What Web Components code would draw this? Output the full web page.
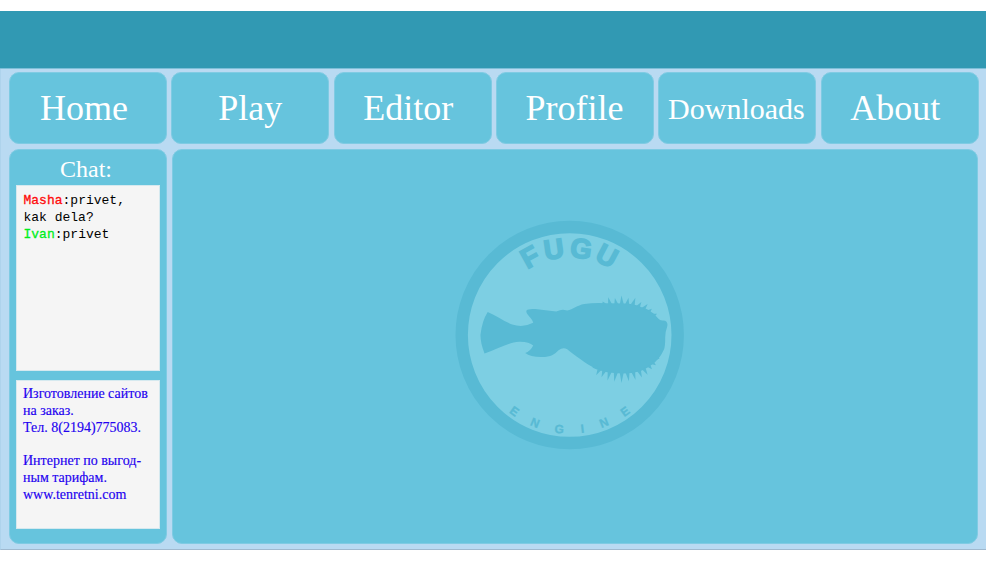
<!DOCTYPE html>
<html lang="en">
<head>
<meta charset="utf-8">
<title>Fugu Engine</title>
<style>
html,body{margin:0;height:562px;background:#fff;overflow:hidden}
body{font-family:"Liberation Serif","Times New Roman",serif}
</style>
</head>
<body>
<fugu-page>
  <fugu-tab slot="nav" style="--inset:31px">Home</fugu-tab>
  <fugu-tab slot="nav" style="--inset:46.8px">Play</fugu-tab>
  <fugu-tab slot="nav" style="--inset:29.5px">Editor</fugu-tab>
  <fugu-tab slot="nav" style="--inset:29.5px">Profile</fugu-tab>
  <fugu-tab slot="nav" style="--inset:9.8px;--size:30px;--line:72px">Downloads</fugu-tab>
  <fugu-tab slot="nav" style="--inset:29.5px">About</fugu-tab>
  <fugu-sidebar slot="side">
    <fugu-message name="Masha" color="#ff0a0a">privet,<br>kak dela?</fugu-message>
    <fugu-message name="Ivan" color="#00ee1c">privet</fugu-message>
    <fugu-ad slot="ad">
      <ad-line>Изготовление сайтов</ad-line>
      <ad-line>на заказ.</ad-line>
      <ad-line style="--h:15px">Тел. 8(2194)775083.</ad-line>
      <ad-line style="--h:18.6px"></ad-line>
      <ad-line>Интернет по выгод-</ad-line>
      <ad-line>ным тарифам.</ad-line>
      <ad-line>www.tenretni.com</ad-line>
    </fugu-ad>
  </fugu-sidebar>
  <fugu-logo></fugu-logo>
</fugu-page>
<script>
const define = (name, html, setup) => customElements.define(name, class extends HTMLElement {
  constructor() {
    super();
    this.attachShadow({ mode: "open" }).innerHTML = html;
  }
  connectedCallback() { if (setup) setup(this, this.shadowRoot); }
});

define("fugu-page", `<style>
:host{display:flex;flex-direction:column;box-sizing:border-box;width:986px;height:550px;padding-top:11px}
header{height:57px;flex:none;background:#3199b3;border-bottom:1px solid #7dbfd8}
.body{flex:1;display:flex;flex-direction:column;gap:5px;box-sizing:border-box;padding:2.5px 7.5px 5px 8px;background:#b9daf2;border-left:1px solid #aed3ec;border-bottom:1px solid #9fb9cf}
nav{display:grid;grid-template-columns:repeat(6,158px);grid-template-rows:72.4px;column-gap:4.33px;height:72.8px;flex:none}
.row{display:flex;gap:5px;flex:1;min-height:0}
main{width:806px;display:grid;place-items:center;box-sizing:border-box;background:#66c4dd;border:1px solid #7fcbe3;border-radius:10px;padding:0 11px 23px 0}
</style><header></header><div class="body"><nav><slot name="nav"></slot></nav><div class="row"><slot name="side"></slot><main><slot></slot></main></div></div>`);

define("fugu-tab", `<style>
:host{display:block;box-sizing:border-box;background:#66c4dd;border:1px solid #7fcbe3;border-radius:10px;color:#fff;white-space:nowrap;padding-left:calc(var(--inset) - 1px);font-size:var(--size,36px);line-height:var(--line,70px)}
</style><slot></slot>`);

define("fugu-sidebar", `<style>
:host{display:flex;flex-direction:column;box-sizing:border-box;width:158px;flex:none;background:#66c4dd;border:1px solid #7fcbe3;border-radius:10px;padding:0 6px}
h2{margin:0;height:35px;line-height:38px;padding-left:44px;font-size:24px;font-weight:400;color:#fff}
.chat{height:186px;box-sizing:border-box;background:#f5f5f5;border:1px solid #d5e9ef;padding:5.5px 6.5px;font:13px/17px "Liberation Mono","Courier New",monospace;color:#000}
.ad{margin-top:9px;height:149px;box-sizing:border-box;background:#f5f5f5;border:1px solid #d5e9ef;padding:5px 6px}
</style><h2>Chat:</h2><div class="chat"><slot></slot></div><div class="ad"><slot name="ad"></slot></div>`);

define("fugu-message", `<style>:host{display:block}span{-webkit-text-stroke:.3px currentColor}</style><span></span>:<slot></slot>`, (el, root) => {
  const who = root.querySelector("span");
  who.textContent = el.getAttribute("name");
  who.style.color = el.getAttribute("color");
});

define("fugu-ad", `<style>:host{display:block;color:#2200f0;font-size:14px;line-height:16.8px;-webkit-text-stroke:.15px #2200f0}</style><slot></slot>`);
define("ad-line", `<style>:host{display:block;height:var(--h,16.8px);line-height:var(--h,16.8px);white-space:nowrap}</style><slot></slot>`);

define("fugu-logo", `<style>
:host{display:block;width:230px;height:230px}svg{display:block}
text{font-family:"Liberation Sans",Arial,sans-serif;font-weight:700;text-anchor:middle;fill:#58bad4}
.big{font-size:27.5px;stroke:#58bad4;stroke-width:1.6}.small{font-size:12px;stroke:#58bad4;stroke-width:.3}
</style><svg width="230" height="230" viewBox="454.8 219.5 230 230">
<circle cx="569.5" cy="334.5" r="108" fill="#7dcfe3" stroke="#58bad4" stroke-width="12.4"/>
<g fill="#58bad4"><path d="M487.5 311.5C496 315 504 321 512 324Q523 327.5 533 322.3C532 317 525 314 526.3 310Q528 308 535 308.6L556 311Q561 309 563 309.3L567 310C573 309 577 304.7 584 303.5Q594 302 606 302.7L624 303Q634 303 642 307C649 309 654 313 658 318Q660 320.5 663 320C667 320 667.7 323 667 326Q664.8 332 665 338Q665 345 664 348.5C661 355 658 359 653 363.3Q647 368 640 370.7Q632 373 622 373Q605 372.5 596 368.5C585 363 575 355 567 348.8Q563 346 558 350C554 354 551 356.7 541 356.6Q530 356.5 525 352.5Q530 351 533 345Q529 341 519 341.2C508 342 497 348.5 484.3 353Q480 342 480.3 334Q482 320 487.5 311.5Z"/>
<g id="spikes"></g></g>
<text class="big" transform="translate(529.6 256) rotate(-29)" y="9.8">F</text>
<text class="big" transform="translate(553.6 248.3) rotate(-8)" y="9.8">U</text>
<text class="big" transform="translate(581 247.7) rotate(8)" y="9.8">G</text>
<text class="big" transform="translate(607 255) rotate(28)" y="9.8">U</text>
<text class="small" transform="translate(514.3 410.7) rotate(36)" y="4.3">E</text>
<text class="small" transform="translate(535 422) rotate(22)" y="4.3">N</text>
<text class="small" transform="translate(559 428.3) rotate(5)" y="4.3">G</text>
<text class="small" transform="translate(582.3 428) rotate(-7)" y="4.3">I</text>
<text class="small" transform="translate(603.7 422) rotate(-22)" y="4.3">N</text>
<text class="small" transform="translate(624.7 411) rotate(-36)" y="4.3">E</text>
</svg>`, (el, root) => {
  // Each spine: tip x, tip y, base centre x, base centre y.
  const spines = [
    [602.4,301,604,304],[608,296.8,609.8,304],[614.7,297.5,616,304],[621.3,295,621.6,304],[628.3,297.3,627,304],
    [635.2,297.3,632.5,304.5],[641.2,301.5,637.8,306.5],[647.4,303.5,643.2,308.5],[651.7,308.2,648,311.5],[656.8,313.3,653,315],
    [592,367,597,367],[596,374.7,599.3,368.5],[601.3,376.7,604,370],[607.3,380,609.5,371],[614,381.2,615.6,372],
    [621.3,382.5,621.5,372],[628.7,380.8,627.3,372],[635.3,379.5,633,371],[641.7,377,638.8,370],[647.4,374.2,643.6,368],
    [651.7,368.8,648.5,365],[655.7,364.8,652,362],[659.5,358,655.5,357.5]];
  root.getElementById("spikes").innerHTML = spines.map(([x, y, bx, by]) => {
    const l = Math.hypot(x - bx, y - by), nx = (y - by) / l * 2, ny = -(x - bx) / l * 2;
    return `<path d="M${bx + nx} ${by + ny}L${x} ${y}L${bx - nx} ${by - ny}Z"/>`;
  }).join("");
});
</script>
</body>
</html>
